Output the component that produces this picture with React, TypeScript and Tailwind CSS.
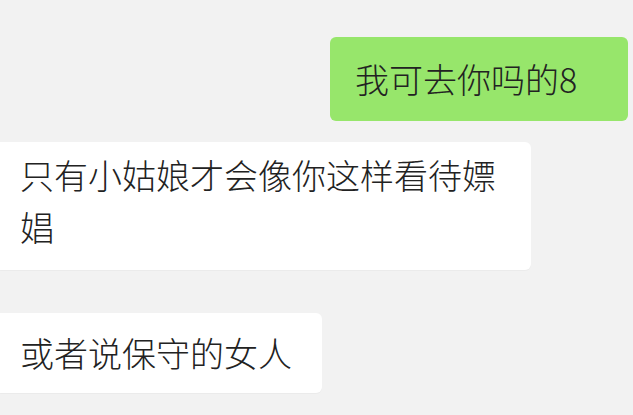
import React from "react";

export default function App() {
  const font = {
    fontFamily: '"Noto Sans CJK SC", "Noto Sans", sans-serif',
  } as React.CSSProperties;
  return (
    <div
      className="w-[633px] h-[415px] bg-[#f2f2f2] overflow-hidden flex flex-col text-[34px] leading-[52px] font-light text-[#222222]"
      style={font}
    >
      <div className="flex justify-end pt-[37px] pr-[5px]">
        <div className="w-[298px] h-[84px] bg-[#97e66b] rounded-[6px] pl-[25px] py-[16px] whitespace-nowrap">
          我可去你吗的8
        </div>
      </div>
      <div className="flex mt-[21px]">
        <div className="w-[531px] h-[128px] bg-white rounded-r-[6px] pl-[20px] pr-[30px] pt-[7px] pb-[17px] shadow-[0_1px_1px_rgba(0,0,0,0.03)]">
          只有小姑娘才会像你这样看待嫖娼
        </div>
      </div>
      <div className="flex mt-[43px]">
        <div className="w-[322px] h-[80px] bg-white rounded-r-[6px] pl-[20px] py-[14px] whitespace-nowrap shadow-[0_1px_1px_rgba(0,0,0,0.03)]">
          或者说保守的女人
        </div>
      </div>
    </div>
  );
}
